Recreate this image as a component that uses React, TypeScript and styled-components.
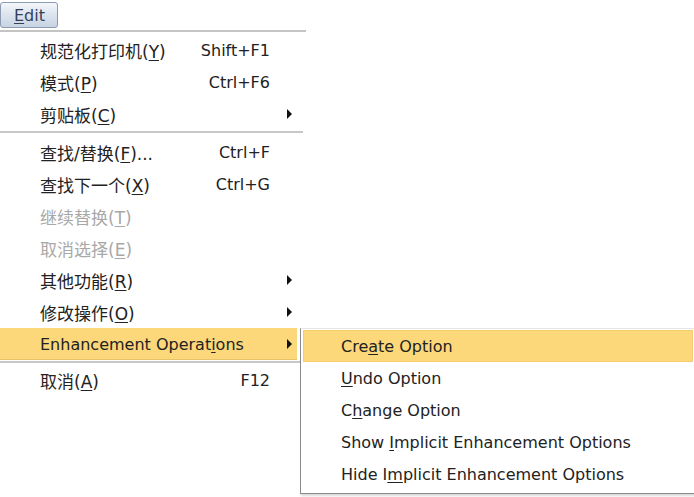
import React from "react";
import styled, { createGlobalStyle } from "styled-components";

const Global = createGlobalStyle`
  html, body { margin: 0; padding: 0; background: #ffffff; }
  body {
    font-family: "DejaVu Sans", "Noto Sans CJK SC", sans-serif;
    font-size: 16px;
    color: #222222;
  }
`;

const Page = styled.div`
  position: relative;
  width: 694px;
  height: 497px;
  overflow: hidden;
  background: #fff;
`;

const MenuBar = styled.div`
  display: flex;
  height: 30px;
  align-items: flex-start;
  padding-top: 2px;
  box-sizing: border-box;
`;

const BarButton = styled.div`
  width: 58px;
  height: 26px;
  box-sizing: border-box;
  border: 1px solid #8d9bb0;
  border-radius: 3px;
  background: linear-gradient(#f4f7fb, #dbe3ee 50%, #c9d4e2);
  display: flex;
  align-items: center;
  padding-left: 13px;
  font-size: 16px;
  color: #34405a;
`;

const Menu = styled.div`
  width: 306px;
  border-top: 2px solid #c4c4c4;
  display: flex;
  flex-direction: column;
  padding-top: 2px;
`;

const Row = styled.div<{ $active?: boolean; $disabled?: boolean }>`
  height: 32px;
  display: grid;
  grid-template-columns: 40px 1fr auto 27px;
  align-items: center;
  margin-right: 9px;
  background: ${(p) => (p.$active ? "#fcd87b" : "transparent")};
  color: ${(p) => (p.$disabled ? "#a8a8a8" : "#222")};
  box-shadow: ${(p) => (p.$active ? "inset 0 -1px 0 #e7c46a" : "none")};
`;

const Label = styled.span<{ $cjk?: boolean }>`
  grid-column: 2;
  white-space: nowrap;
  font-size: ${(p) => (p.$cjk ? "17px" : "16px")};
`;

const Shortcut = styled.span`
  grid-column: 3;
  text-align: right;
  white-space: nowrap;
`;

const Arrow = styled.span`
  grid-column: 4;
  justify-self: start;
  margin-left: 17px;
  width: 0;
  height: 0;
  border-top: 5px solid transparent;
  border-bottom: 5px solid transparent;
  border-left: 5px solid #111;
`;

const Sep = styled.div<{ $after?: number }>`
  height: 2px;
  margin: 1px 3px ${(p) => p.$after ?? 2}px 0;
  background: #c8c8c8;
`;

const U = styled.span`
  text-decoration: underline;
  text-underline-offset: 2px;
`;

const Sub = styled.div`
  position: absolute;
  left: 300px;
  top: 328px;
  width: 400px;
  height: 166px;
  box-sizing: border-box;
  border-left: 1px solid #8a8a8a;
  border-bottom: 1px solid #8a8a8a;
  border-top: 1px solid #e6e6e6;
  background: #fff;
  box-shadow: 1px 2px 2px rgba(0, 0, 0, 0.15);
  padding: 1px 0 0 2px;
  display: flex;
  flex-direction: column;
`;

const SubRow = styled.div<{ $active?: boolean }>`
  height: 32px;
  display: flex;
  align-items: center;
  padding-left: 38px;
  width: 390px;
  box-sizing: border-box;
  background: ${(p) => (p.$active ? "#fcd87b" : "transparent")};
  box-shadow: ${(p) => (p.$active ? "inset 0 0 0 1px #f4ce6e" : "none")};
`;

const SubText = styled.span`
  white-space: pre;
`;

type Item =
  | { sep: true; after?: number }
  | {
      sep?: false;
      pre: string;
      key: string;
      post: string;
      shortcut?: string;
      arrow?: boolean;
      disabled?: boolean;
      active?: boolean;
      latin?: boolean;
    };

const items: Item[] = [
  { pre: "规范化打印机(", key: "Y", post: ")", shortcut: "Shift+F1" },
  { pre: "模式(", key: "P", post: ")", shortcut: "Ctrl+F6" },
  { pre: "剪贴板(", key: "C", post: ")", arrow: true },
  { sep: true, after: 3 },
  { pre: "查找/替换(", key: "F", post: ")...", shortcut: "Ctrl+F" },
  { pre: "查找下一个(", key: "X", post: ")", shortcut: "Ctrl+G" },
  { pre: "继续替换(", key: "T", post: ")", disabled: true },
  { pre: "取消选择(", key: "E", post: ")", disabled: true },
  { pre: "其他功能(", key: "R", post: ")", arrow: true },
  { pre: "修改操作(", key: "O", post: ")", arrow: true },
  { pre: "Enhancement Operat", key: "i", post: "ons", arrow: true, active: true, latin: true },
  { sep: true, after: 1 },
  { pre: "取消(", key: "A", post: ")", shortcut: "F12" },
];

const subItems = [
  { pre: "Cre", key: "a", post: "te Option", active: true },
  { pre: "", key: "U", post: "ndo Option" },
  { pre: "C", key: "h", post: "ange Option" },
  { pre: "Show ", key: "I", post: "mplicit Enhancement Options" },
  { pre: "Hide I", key: "m", post: "plicit Enhancement Options" },
];

export default function App() {
  return (
    <Page>
      <Global />
      <MenuBar>
        <BarButton>
          <U>E</U>dit
        </BarButton>
      </MenuBar>
      <Menu>
        {items.map((it, i) =>
          it.sep ? (
            <Sep key={i} $after={it.after} />
          ) : (
            <Row key={i} $active={it.active} $disabled={it.disabled}>
              <Label $cjk={!it.latin}>
                {it.pre}
                <U>{it.key}</U>
                {it.post}
              </Label>
              {it.shortcut && <Shortcut>{it.shortcut}</Shortcut>}
              {it.arrow && <Arrow />}
            </Row>
          )
        )}
      </Menu>
      <Sub>
        {subItems.map((s, i) => (
          <SubRow key={i} $active={s.active}>
            <SubText>
              {s.pre}
              <U>{s.key}</U>
              {s.post}
            </SubText>
          </SubRow>
        ))}
      </Sub>
    </Page>
  );
}
